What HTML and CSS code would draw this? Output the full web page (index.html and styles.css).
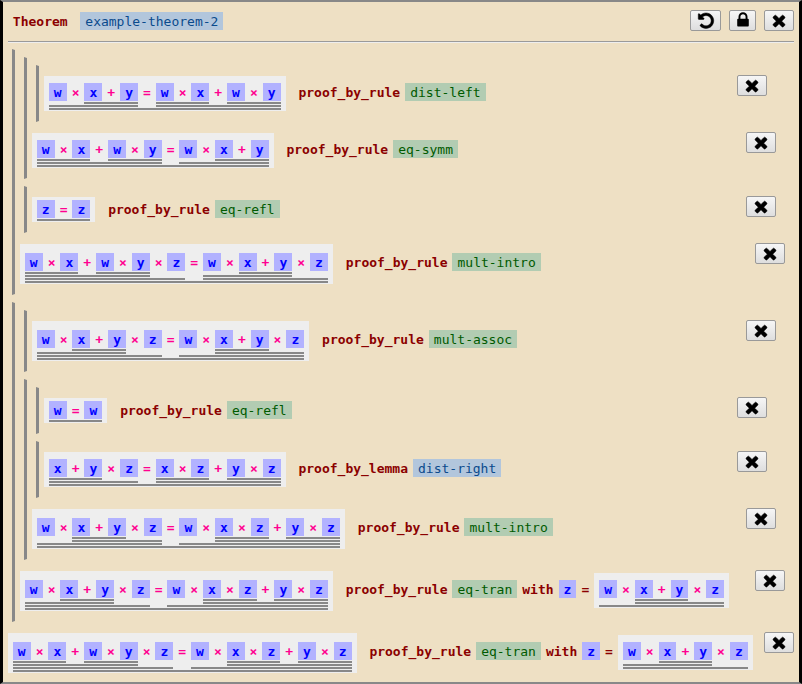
FILE: index.html
```html
<!DOCTYPE html>
<html lang="en">
<head>
<meta charset="utf-8">
<title>Theorem</title>
<link rel="stylesheet" href="styles.css">
</head>
<body>
<svg class="defs" width="0" height="0">
  <symbol id="times" viewBox="0 50 1792 1792"><path d="M1490 1322q0 40-28 68l-136 136q-28 28-68 28t-68-28l-294-294-294 294q-28 28-68 28t-68-28l-136-136q-28-28-28-68t28-68l294-294-294-294q-28-28-28-68t28-68l136-136q28-28 68-28t68 28l294 294 294-294q28-28 68-28t68 28l136 136q28 28 28 68t-28 68l-294 294 294 294q28 28 28 68z"/></symbol>
  <symbol id="undo" viewBox="0 30 1792 1792"><path d="M1664 896q0 156-61 298t-164 245-245 164-298 61q-172 0-327-72.5t-264-204.5q-7-10-6.5-22.5t8.5-20.5l137-138q10-9 25-9 16 2 23 12 73 95 179 147t225 52q104 0 198.5-40.5t163.5-109.5 109.5-163.5 40.5-198.5-40.5-198.5-109.5-163.5-163.5-109.5-198.5-40.5q-98 0-188 35.5t-160 101.5l137 138q31 30 14 69-17 40-59 40h-448q-26 0-45-19t-19-45v-448q0-42 40-59 39-17 69 14l130 129q107-101 244.5-156.5t284.5-55.5q156 0 298 61t245 164 164 245 61 298z"/></symbol>
  <symbol id="lock" viewBox="0 0 1792 1792"><path d="M640 768h512v-192q0-106-75-181t-181-75-181 75-75 181v192zm832 96v576q0 40-28 68t-68 28h-960q-40 0-68-28t-28-68v-576q0-40 28-68t68-28h32v-192q0-184 132-316t316-132 316 132 132 316v192h32q40 0 68 28t28 68z"/></symbol>
</svg>
<main class="theorem">
  <header class="header">
    <span class="keyword">Theorem</span>
    <span class="tag lemma">example-theorem-2</span>
    <div class="tools">
      <button class="button undo"><svg><use href="#undo"/></svg></button>
      <button class="button lock"><svg><use href="#lock"/></svg></button>
      <button class="button"><svg><use href="#times"/></svg></button>
    </div>
  </header>
  <section class="proof">
    <div class="node">
      <div class="node">
        <div class="node">
          <div class="row" data-expr="((w×(x+y))=((w×x)+(w×y)))" data-rule="dist-left"></div>
        </div>
        <div class="row" data-expr="(((w×x)+(w×y))=(w×(x+y)))" data-rule="eq-symm"></div>
      </div>
      <div class="node">
        <div class="row" data-expr="(z=z)" data-rule="eq-refl"></div>
      </div>
      <div class="row" data-expr="((((w×x)+(w×y))×z)=((w×(x+y))×z))" data-rule="mult-intro"></div>
    </div>
    <div class="node">
      <div class="node">
        <div class="row" data-expr="(((w×(x+y))×z)=(w×((x+y)×z)))" data-rule="mult-assoc"></div>
      </div>
      <div class="node">
        <div class="node">
          <div class="row" data-expr="(w=w)" data-rule="eq-refl"></div>
        </div>
        <div class="node">
          <div class="row" data-expr="(((x+y)×z)=((x×z)+(y×z)))" data-lemma="dist-right"></div>
        </div>
        <div class="row" data-expr="((w×((x+y)×z))=(w×((x×z)+(y×z))))" data-rule="mult-intro"></div>
      </div>
      <div class="row" data-expr="(((w×(x+y))×z)=(w×((x×z)+(y×z))))" data-rule="eq-tran" data-with="(w×((x+y)×z))"></div>
    </div>
    <div class="row" data-expr="((((w×x)+(w×y))×z)=(w×((x×z)+(y×z))))" data-rule="eq-tran" data-with="((w×(x+y))×z)"></div>
  </section>
</main>
<script src="proof.js"></script>
</body>
</html>
```
FILE: styles.css
```css
* { box-sizing: border-box; }

body {
  margin: 0;
  font: 13px/15px "DejaVu Sans Mono", monospace;
}

.defs { position: absolute; }

.theorem {
  height: 684px;
  padding: 8px 5px 0 4.83px;
  border: solid;
  border-width: 2px 3px;
  border-color: #888 #000;
  background: #eee0c4;
}

.header {
  display: flex;
  align-items: flex-start;
  height: 32px;
  padding-left: 5px;
  border-bottom: 1px solid #9a9a9a;
  box-shadow: 0 1px #eee;
}

.header .keyword { padding-top: 4px; }
.header .tag { margin: 2px 0 0 12.7px; }

.tools {
  display: flex;
  gap: 8px;
  margin-left: auto;
}

.button {
  display: flex;
  align-items: center;
  justify-content: center;
  flex: none;
  width: 30px;
  height: 21px;
  padding: 0;
  border: 1px solid #999;
  border-radius: 2px;
  background: linear-gradient(#f6f6f6, #dedede);
  color: #000;
}

.button svg {
  width: 18px;
  height: 18px;
  fill: currentColor;
  stroke: currentColor;
  stroke-width: 50px;
}

.button.undo { width: 31px; }
.button.lock { width: 27px; padding-bottom: 1px; }
.button.lock svg { stroke: none; }

.proof { padding-top: 1px; }

.node {
  margin: 6px 9px 0 4px;
  padding-left: 5px;
  border: solid transparent;
  border-width: 1px 0 1px 3px;
  border-left-color: #888;
}

.node > .node:first-child,
.node + .node { margin-top: 7px; }

.row {
  display: flex;
  align-items: flex-start;
  justify-content: space-between;
  padding: 10px 0;
}

.node + .row { margin-top: 1px; }
.row .button { margin-top: -1px; }

.line {
  display: flex;
  align-items: baseline;
  white-space: nowrap;
}

.keyword {
  color: #8b0000;
  font-weight: bold;
}

.line .by { margin-left: 12.83px; }

.tag, .var, .op {
  display: inline-block;
  padding: 2px 5px 1px;
}

.tag { margin: 0 5px; }
.rule { background: #b2ccb2; color: #005a00; }
.lemma { background: #b2c6dc; color: #0a4a8c; }

.var {
  background: #b2b2ff;
  color: #00f;
  font-weight: bold;
}

.op {
  color: #ff0090;
  font-weight: bold;
}

.with { margin-right: 5px; }
.eq { padding: 0 5px; }

.formula {
  display: inline-flex;
  padding: 1px 5px;
  background: #eee;
}

.term {
  display: inline-flex;
  align-items: baseline;
  padding: 2px 0 1px;
  border-bottom: 2px solid #888;
}
```
FILE: proof.js
```js
function el(tag, cls, ...children) {
  const node = document.createElement(tag);
  node.className = cls;
  node.append(...children);
  return node;
}

// Turns a fully parenthesised infix string into nested underlined terms.
function formula(text) {
  const root = el("span", "formula");
  const stack = [root];
  for (const ch of text) {
    const top = stack[stack.length - 1];
    if (ch === "(") {
      const term = el("span", "term");
      top.append(term);
      stack.push(term);
    } else if (ch === ")") {
      stack.pop();
    } else {
      top.append(el("span", /[a-z]/.test(ch) ? "var" : "op", ch));
    }
  }
  return root;
}

for (const row of document.querySelectorAll(".row")) {
  const { expr, rule, lemma, with: subst } = row.dataset;
  const line = el("div", "line",
    formula(expr),
    el("span", "keyword by", rule ? "proof_by_rule" : "proof_by_lemma"),
    el("span", rule ? "tag rule" : "tag lemma", rule || lemma));
  if (subst) {
    line.append(
      el("span", "keyword with", "with"),
      el("span", "var", "z"),
      el("span", "keyword eq", "="),
      formula(subst));
  }
  const button = el("button", "button");
  button.innerHTML = '<svg><use href="#times"/></svg>';
  row.append(line, button);
}
```
